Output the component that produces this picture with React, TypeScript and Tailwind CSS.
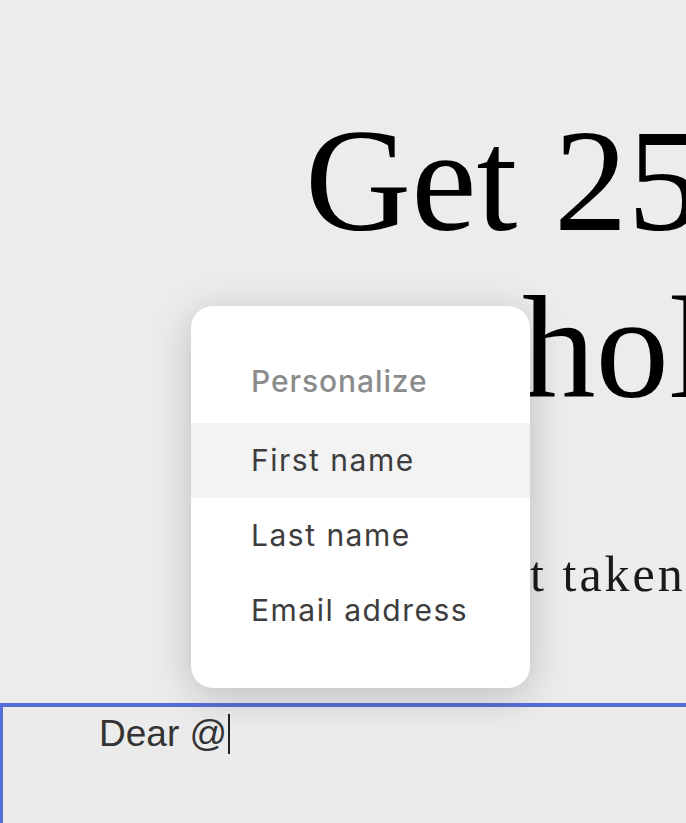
import * as React from "react"

const items = ["First name", "Last name", "Email address"]

/** Mention menu shown over the editor when "@" is typed */
function PersonalizeMenu() {
  return (
    <div
      className="absolute left-[191px] top-[306px] z-10 w-[339px] rounded-[22px] bg-white pt-[38px] pb-[40px] shadow-[0_8px_40px_rgba(0,0,0,0.2)] font-['Inter',sans-serif] text-[30px] tracking-[1.5px]"
      role="menu"
    >
      {/* Header */}
      <div className="flex h-[75px] items-center pl-[60px] font-medium tracking-[0.9px] text-[#8c8c8c]">
        Personalize
      </div>
      <div className="mt-[4px]">
        {items.map((label, i) => (
          <div
            key={label}
            role="menuitem"
            className={
              i === 0
                ? "flex h-[75px] items-center bg-[#f3f3f3] pl-[60px] text-[#3d3d3d]"
                : "flex h-[75px] items-center pl-[60px] text-[#3d3d3d]"
            }
          >
            {label}
          </div>
        ))}
      </div>
    </div>
  )
}

export default function App() {
  return (
    <div className="relative h-[823px] w-[686px] overflow-hidden bg-[#ececec]">
      {/* Page heading behind the menu */}
      <div className="whitespace-nowrap pt-[97px] font-['Liberation_Serif',serif] text-[147px] leading-[167px] text-black">
        <div className="pl-[305px]">Get 25% off</div>
        <div className="pl-[522px]">holiday</div>
      </div>
      <div className="mt-[113px] whitespace-nowrap pl-[463px] font-['Liberation_Serif',serif] text-[50px] leading-[60px] tracking-[3px] text-[#1a1a1a]">
        Not taken for granted
      </div>

      {/* Editor */}
      <div className="mt-[99px] h-[200px] border-l-[3px] border-t-[4px] border-[#5470d6] bg-[#ebebeb] pl-[96px] pt-[5px]">
        <div className="flex items-center font-['Liberation_Sans',Arial,sans-serif] text-[37px] leading-[44px] text-[#333333]">
          <span>Dear @</span>
          <span className="ml-[1px] h-[40px] w-[2px] bg-[#222222]" />
        </div>
      </div>

      <PersonalizeMenu />
    </div>
  )
}
